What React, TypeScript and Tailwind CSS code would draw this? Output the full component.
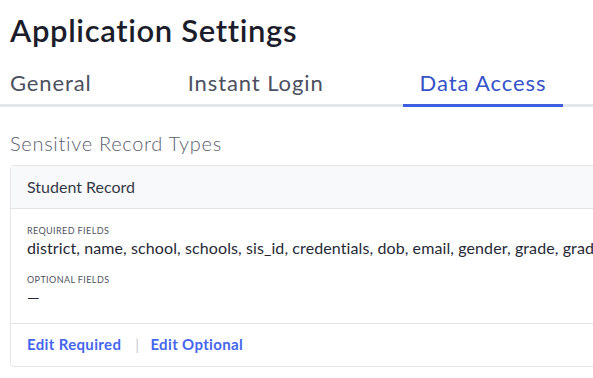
import { useState } from "react";

const tabs = ["General", "Instant Login", "Data Access"];

function App() {
    const [active, setActive] = useState("Data Access");

    return (
        <div className="w-[593px] h-[378px] overflow-hidden bg-white pl-[10px]" style={{ fontFamily: "Lato, 'Noto Sans', sans-serif" }}>
            <h1 className="pt-[15px] text-[31px] leading-none font-semibold tracking-[0.65px] text-[#1c1d2b]">Application Settings</h1>

            {/* tabs */}
            <div className="-ml-[10px] mt-[26px] border-b-[3px] border-[#e3e6eb]">
                <div className="flex gap-[62px] -ml-[7px]">
                    {tabs.map((t) => (
                        <button
                            key={t}
                            onClick={() => setActive(t)}
                            className={
                                t === active
                                    ? "px-[17px] pb-[10px] -mb-[3px] border-b-[3px] border-[#3d5fe0] text-[22px] leading-none tracking-[0.9px] text-[#3553c9]"
                                    : "px-[17px] pb-[10px] -mb-[3px] border-b-[3px] border-transparent text-[22px] leading-none tracking-[0.9px] text-[#4b505e]"
                            }
                        >
                            {t}
                        </button>
                    ))}
                </div>
            </div>

            <h2 className="mt-[26px] text-[20px] leading-none font-light tracking-[0.7px] text-[#5b6070]">Sensitive Record Types</h2>

            {/* record card */}
            <div className="mt-[12px] w-[700px] border border-[#e3e5ea] rounded-[4px]">
                <div className="bg-[#f8f9fb] border-b border-[#e3e5ea] px-[16px] py-[13px] text-[16px] leading-none text-[#363a48]">
                    Student Record
                </div>
                <div className="px-[16px] pt-[17px] pb-[18px]">
                    <div className="text-[9px] leading-none uppercase tracking-[0.4px] text-[#4f5361]">Required Fields</div>
                    <div className="mt-[5px] text-[16px] leading-none whitespace-nowrap tracking-[0.1px] text-[#262936]">
                        district, name, school, schools, sis_id, credentials, dob, email, gender, grade, graduation_year
                    </div>
                    <div className="mt-[19px] text-[9px] leading-none uppercase tracking-[0.4px] text-[#4f5361]">Optional Fields</div>
                    <div className="mt-[5px] text-[16px] leading-none text-[#262936]">—</div>
                </div>
                <div className="border-t border-[#e3e5ea] px-[16px] pt-[13px] pb-[14px] flex items-center text-[15px] leading-none font-bold tracking-[0.35px] text-[#4466ee]">
                    <a href="#" className="hover:underline">Edit Required</a>
                    <span className="ml-[14px] mr-[11px] font-normal text-[#c9ccd3]">|</span>
                    <a href="#" className="hover:underline">Edit Optional</a>
                </div>
            </div>
        </div>
    );
}

export default App;
